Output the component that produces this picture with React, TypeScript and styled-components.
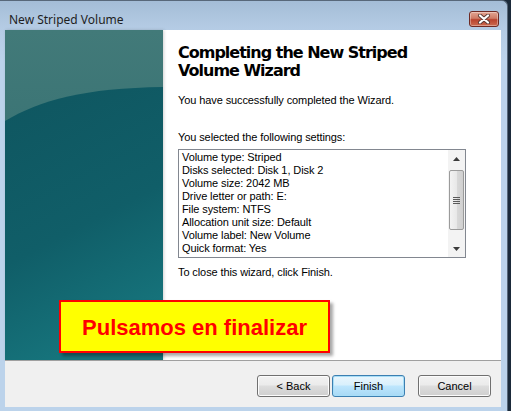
import styled, { createGlobalStyle } from "styled-components";

const GlobalStyle = createGlobalStyle`
  html, body {
    margin: 0;
    padding: 0;
    background: #1b2a3a;
  }
  #root {
    width: 511px;
    height: 411px;
    overflow: hidden;
  }
`

const Window = styled.div`
  position: relative;
  box-sizing: border-box;
  width: 508px;
  height: 411px;
  padding: 0 6px 4px 5px;
  display: flex;
  flex-direction: column;
  border-top: 1px solid #58687a;
  border-right: 1px solid #58687a;
  border-top-right-radius: 6px;
  background: linear-gradient(#a4bdd7 0px, #b4cbe4 26px, #bcd3eb 60px, #bcd3eb 100%);
`

const TitleBar = styled.div`
  height: 29px;
  display: flex;
  align-items: center;
  justify-content: space-between;
  padding: 0 2px 0 4px;
`

const TitleText = styled.span`
  font-family: "Noto Sans", "Open Sans", sans-serif;
  font-size: 12px;
  color: #1e1e1e;
  margin-top: 7px;
`

const CloseButton = styled.div`
  width: 30px;
  height: 16px;
  margin-top: 7px;
  box-sizing: border-box;
  border: 1px solid #6e2a24;
  border-radius: 3px;
  background: linear-gradient(#e3a593 0%, #cf7b66 45%, #b9432e 55%, #cc6a4f 100%);
  box-shadow: inset 0 0 0 1px rgba(255, 255, 255, 0.35);
  display: flex;
  align-items: center;
  justify-content: center;
`

const Client = styled.div`
  position: relative;
  flex: 1;
  display: flex;
  flex-direction: column;
  background: #ffffff;
`

const Main = styled.div`
  height: 330px;
  display: flex;
`

const SidePanel = styled.div`
  width: 158px;
  height: 330px;
  flex-shrink: 0;
  box-shadow: 1px 0 3px rgba(0, 0, 0, 0.18);
  svg {
    display: block;
  }
`

const Content = styled.div`
  flex: 1;
  padding: 14px 0 0 15px;
  font-family: "Liberation Sans", Arial, sans-serif;
  font-size: 11px;
  line-height: 13px;
  color: #000000;
`

const Heading = styled.h1`
  margin: 0 0 14px 0;
  font-family: "DejaVu Sans", Verdana, sans-serif;
  font-size: 16px;
  line-height: 18px;
  letter-spacing: -1px;
  font-weight: bold;
  color: #000000;
  white-space: nowrap;
`

const Para = styled.p<{ $gap: number }>`
  margin: 0 0 ${(p) => p.$gap}px 0;
  letter-spacing: -0.1px;
`

const ListBox = styled.div`
  width: 288px;
  height: 109px;
  box-sizing: border-box;
  border: 1px solid #828790;
  display: flex;
  margin-bottom: 8px;
`

const ListLines = styled.div`
  flex: 1;
  padding: 1px 0 0 3px;
  letter-spacing: -0.1px;
`

const ListLine = styled.div`
  height: 13px;
  white-space: nowrap;
`

const ScrollBar = styled.div`
  width: 17px;
  display: flex;
  flex-direction: column;
  align-items: center;
  background: #f3f3f3;
`

const ArrowCell = styled.div`
  height: 17px;
  width: 17px;
  display: flex;
  align-items: center;
  justify-content: center;
`

const Thumb = styled.div`
  box-sizing: border-box;
  width: 15px;
  height: 60px;
  margin: 3px 0;
  border: 1px solid #9b9b9b;
  border-radius: 2px;
  background: linear-gradient(90deg, #f3f3f3 0%, #e8e8e8 50%, #d9d9d9 51%, #d0d0d0 100%);
  display: flex;
  flex-direction: column;
  align-items: center;
  justify-content: center;
  gap: 1px;
`

const Grip = styled.div`
  width: 7px;
  height: 1px;
  background: #5a5a5a;
`

const Spacer = styled.div`
  flex: 1;
`

const Footer = styled.div`
  flex: 1;
  border-top: 1px solid #a0a0a0;
  background: #f0f0f0;
  display: flex;
  justify-content: flex-end;
  align-items: flex-start;
  padding: 14px 10px 0 0;
`

const Button = styled.button<{ $default?: boolean; $gap?: number }>`
  box-sizing: border-box;
  width: 73px;
  height: 22px;
  margin-left: ${(p) => p.$gap ?? 0}px;
  padding: 0;
  font-family: "Liberation Sans", Arial, sans-serif;
  font-size: 11px;
  color: #000000;
  border-radius: 3px;
  border: 1px solid ${(p) => (p.$default ? "#3c7fb1" : "#707070")};
  background: ${(p) =>
    p.$default
      ? "linear-gradient(#eaf6fd 0%, #d9f0fc 45%, #bee6fd 50%, #a7d9f5 100%)"
      : "linear-gradient(#f2f2f2 0%, #ebebeb 45%, #dddddd 50%, #cfcfcf 100%)"};
  box-shadow: inset 0 0 0 1px ${(p) => (p.$default ? "#a8def7" : "#fcfcfc")};
`

const Callout = styled.div`
  position: absolute;
  left: 54px;
  top: 270px;
  box-sizing: border-box;
  width: 271px;
  height: 53px;
  border: 2px solid #ff0000;
  background: #ffff00;
  box-shadow: 3px 3px 3px rgba(0, 0, 0, 0.35);
  display: flex;
  align-items: center;
  justify-content: center;
  font-family: "Liberation Sans", Arial, sans-serif;
  font-weight: bold;
  font-size: 22px;
  color: #ff0000;
  padding-top: 2px;
`

const settings = [
  "Volume type: Striped",
  "Disks selected: Disk 1, Disk 2",
  "Volume size: 2042 MB",
  "Drive letter or path: E:",
  "File system: NTFS",
  "Allocation unit size: Default",
  "Volume label: New Volume",
  "Quick format: Yes",
]

function Banner() {
  return (
    <svg width="158" height="330" viewBox="0 0 158 330">
      <defs>
        <linearGradient id="upper" x1="0" y1="0" x2="0" y2="1">
          <stop offset="0" stopColor="#427a79" />
          <stop offset="1" stopColor="#2b686c" />
        </linearGradient>
        <linearGradient id="lower" x1="0" y1="0" x2="0.3" y2="1">
          <stop offset="0" stopColor="#0f5660" />
          <stop offset="0.6" stopColor="#105e68" />
          <stop offset="1" stopColor="#16737b" />
        </linearGradient>
      </defs>
      <rect width="158" height="330" fill="url(#upper)" />
      <path d="M0,91 C35,70 80,58 158,57 L158,330 L0,330 Z" fill="url(#lower)" />
    </svg>
  )
}

export default function App() {
  return (
    <>
      <GlobalStyle />
      <Window>
        <TitleBar>
          <TitleText>New Striped Volume</TitleText>
          <CloseButton>
            <svg width="14" height="10" viewBox="0 0 14 10">
              <path d="M3,1.5 L11,8.5 M11,1.5 L3,8.5" stroke="#5a3a35" strokeWidth="4" strokeLinecap="round" />
              <path d="M3,1.5 L11,8.5 M11,1.5 L3,8.5" stroke="#ffffff" strokeWidth="2.2" strokeLinecap="round" />
            </svg>
          </CloseButton>
        </TitleBar>
        <Client>
          <Main>
            <SidePanel>
              <Banner />
            </SidePanel>
            <Content>
              <Heading>
                Completing the New Striped
                <br />
                Volume Wizard
              </Heading>
              <Para $gap={24}>You have successfully completed the Wizard.</Para>
              <Para $gap={5}>You selected the following settings:</Para>
              <ListBox>
                <ListLines>
                  {settings.map((s) => (
                    <ListLine key={s}>{s}</ListLine>
                  ))}
                </ListLines>
                <ScrollBar>
                  <ArrowCell>
                    <svg width="7" height="4" viewBox="0 0 7 4">
                      <path d="M0,4 L3.5,0 L7,4 Z" fill="#3b3b3b" />
                    </svg>
                  </ArrowCell>
                  <Thumb>
                    <Grip />
                    <Grip />
                    <Grip />
                    <Grip />
                  </Thumb>
                  <Spacer />
                  <ArrowCell>
                    <svg width="7" height="4" viewBox="0 0 7 4">
                      <path d="M0,0 L7,0 L3.5,4 Z" fill="#3b3b3b" />
                    </svg>
                  </ArrowCell>
                </ScrollBar>
              </ListBox>
              <Para $gap={0}>To close this wizard, click Finish.</Para>
            </Content>
          </Main>
          <Footer>
            <Button>&lt; Back</Button>
            <Button $default $gap={2}>Finish</Button>
            <Button $gap={13}>Cancel</Button>
          </Footer>
          <Callout>Pulsamos en finalizar</Callout>
        </Client>
      </Window>
    </>
  )
}
